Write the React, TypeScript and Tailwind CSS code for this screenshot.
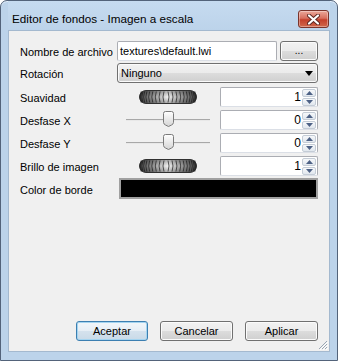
import React from 'react'

const btn =
  'bg-[linear-gradient(180deg,#f2f2f2_0%,#ebebeb_49%,#dddddd_50%,#cfcfcf_100%)] border border-[#707070] rounded-[3px] shadow-[inset_0_0_0_1px_#fbfbfb]'

function JogWheel() {
  const ridges = Array.from({ length: 21 }, (_, i) => 29 - 27 * Math.cos((Math.PI * (i + 0.5)) / 21))
  return (
    <svg width="58" height="14" viewBox="0 0 58 14">
      <defs>
        <linearGradient id="jw" x1="0" x2="1" y1="0" y2="0">
          <stop offset="0" stopColor="#4a4a4a" />
          <stop offset="0.25" stopColor="#9a9a9a" />
          <stop offset="0.5" stopColor="#f4f4f4" />
          <stop offset="0.75" stopColor="#9a9a9a" />
          <stop offset="1" stopColor="#4a4a4a" />
        </linearGradient>
        <linearGradient id="jv" x1="0" x2="0" y1="0" y2="1">
          <stop offset="0" stopColor="#000" stopOpacity="0.3" />
          <stop offset="0.5" stopColor="#000" stopOpacity="0" />
          <stop offset="1" stopColor="#000" stopOpacity="0.3" />
        </linearGradient>
      </defs>
      <rect x="0.5" y="0.5" width="57" height="13" rx="6.5" fill="url(#jw)" stroke="#3a3a3a" />
      {ridges.map((x, i) => (
        <path
          key={i}
          d={`M${x} 1.5 Q${x + (x < 29 ? -2 : 2)} 7 ${x} 12.5`}
          stroke="#222"
          strokeOpacity="0.8"
          strokeWidth="0.9"
          fill="none"
        />
      ))}
      <rect x="0.5" y="0.5" width="57" height="13" rx="6.5" fill="url(#jv)" />
    </svg>
  )
}

function Slider() {
  return (
    <div className="relative w-[84px] h-[16px] flex items-center">
      <div className="w-full h-[2px] bg-[#e8e8e8] border-t border-[#a8a8a8]" />
      {/* thumb */}
      <svg className="absolute left-[37px] top-[-1px]" width="11" height="16" viewBox="0 0 11 16">
        <defs>
          <linearGradient id="th" x1="0" x2="0" y1="0" y2="1">
            <stop offset="0" stopColor="#ffffff" />
            <stop offset="1" stopColor="#d4d4d4" />
          </linearGradient>
        </defs>
        <path
          d="M0.5 2.5 Q0.5 0.5 2.5 0.5 H8.5 Q10.5 0.5 10.5 2.5 V11.5 Q10.5 13 8.5 14 L5.5 15.5 L2.5 14 Q0.5 13 0.5 11.5 Z"
          fill="url(#th)"
          stroke="#7a7a7a"
        />
      </svg>
    </div>
  )
}

function Arrow({ up }: { up?: boolean }) {
  return (
    <div className="h-[8px] w-[14px] flex items-center justify-center rounded-[2px] border border-[#c4ccd6] bg-[linear-gradient(180deg,#f6f8fa,#e1e7ee)]">
      <svg width="7" height="4" viewBox="0 0 7 4">
        <path d={up ? 'M0 4 L3.5 0 L7 4 Z' : 'M0 0 L3.5 4 L7 0 Z'} fill="#4d6185" />
      </svg>
    </div>
  )
}

function Spin({ value }: { value: string }) {
  return (
    <div className="w-[98px] h-[20px] flex items-center bg-white border border-[#abadb3] border-b-[#dbdfe6] rounded-[2px]">
      <span className="flex-1 text-right pr-[1px] text-[12px] leading-none">{value}</span>
      <div className="flex flex-col gap-px mr-[1px]">
        <Arrow up />
        <Arrow />
      </div>
    </div>
  )
}

function Label({ children }: { children: React.ReactNode }) {
  return <div className="w-[97px] shrink-0 pt-[3px] text-[11px] leading-none">{children}</div>
}

export default function App() {
  return (
    <div
      className="relative flex flex-col w-[338px] h-[361px] rounded-t-[7px] border border-[#53637a] bg-[#bcd3ea] px-[7px] pb-[8px] text-black shadow-[inset_0_1px_0_#e3eefa]"
      style={{ fontFamily: '"Liberation Sans", Arial, sans-serif' }}
    >
      {/* Title bar */}
      <div className="h-[29px] flex items-start justify-between bg-[linear-gradient(180deg,#c6dbf0,#bcd3ea)]">
        <span className="pl-[4px] pt-[12px] text-[11.7px] leading-none">Editor de fondos - Imagen a escala</span>
        <div className="mt-[9px] mr-[1px] w-[31px] h-[18px] flex items-center justify-center rounded-[3px] border border-[#7a342b] bg-[linear-gradient(180deg,#eba89a_0%,#d8705f_45%,#c4402b_55%,#d0684c_100%)] shadow-[inset_0_0_0_1px_rgba(255,255,255,0.35)]">
          <svg width="13" height="11" viewBox="0 0 13 11">
            <path d="M2 1.5 L11 9.5 M11 1.5 L2 9.5" stroke="#5a2620" strokeWidth="4" strokeLinecap="round" />
            <path d="M2 1.5 L11 9.5 M11 1.5 L2 9.5" stroke="#ffffff" strokeWidth="2.2" strokeLinecap="round" />
          </svg>
        </div>
      </div>

      {/* Client area */}
      <div className="relative flex-1 flex flex-col bg-[#f0f0f0] border border-[#a4b9cf] px-[11px] pt-[10px] pb-[10px]">
        <div className="flex items-center h-[20px]">
          <Label>Nombre de archivo</Label>
          <div className="w-[160px] h-[20px] flex items-center pl-[2px] bg-white border border-[#abadb3] border-b-[#dbdfe6] rounded-[2px] text-[11px] leading-none">
            {'textures\\default.lwi'}
          </div>
          <button className={`ml-[3px] w-[38px] h-[20px] flex items-end justify-center pb-[4px] text-[10px] leading-none ${btn}`}>
            ...
          </button>
        </div>

        <div className="flex items-center h-[20px] mt-[2px]">
          <Label>Rotación</Label>
          <div className={`flex-1 h-[20px] flex items-center justify-between pl-[3px] pr-[4px] text-[11px] leading-none ${btn}`}>
            <span>Ninguno</span>
            <svg width="8" height="5" viewBox="0 0 8 5">
              <path d="M0 0 H8 L4 5 Z" fill="#000" />
            </svg>
          </div>
        </div>

        <div className="flex items-center h-[20px] mt-[4px]">
          <Label>Suavidad</Label>
          <div className="w-[103px] flex justify-center pr-[1px]">
            <JogWheel />
          </div>
          <Spin value="1" />
        </div>

        <div className="flex items-center h-[20px] mt-[3px]">
          <Label>Desfase X</Label>
          <div className="w-[103px] flex justify-center pr-[1px]">
            <Slider />
          </div>
          <Spin value="0" />
        </div>

        <div className="flex items-center h-[20px] mt-[3px]">
          <Label>Desfase Y</Label>
          <div className="w-[103px] flex justify-center pr-[1px]">
            <Slider />
          </div>
          <Spin value="0" />
        </div>

        <div className="flex items-center h-[20px] mt-[3px]">
          <Label>Brillo de imagen</Label>
          <div className="w-[103px] flex justify-center pr-[1px]">
            <JogWheel />
          </div>
          <Spin value="1" />
        </div>

        <div className="flex items-center h-[21px] mt-[2px]">
          <Label>Color de borde</Label>
          <div className="ml-[2px] flex-1 h-[21px] bg-black border-2 border-[#a0a0a0]" />
        </div>

        <div className="flex-1" />

        <div className="flex justify-end gap-[12px] text-[11px] leading-none">
          <button className="w-[72px] h-[20px] rounded-[3px] border border-[#3c7fb1] bg-[linear-gradient(180deg,#f1f6fa_0%,#e6eef5_49%,#d5e2ed_50%,#c9dae8_100%)] shadow-[inset_0_0_0_1px_#a4d4f0]">
            Aceptar
          </button>
          <button className={`w-[73px] h-[20px] ${btn}`}>Cancelar</button>
          <button className={`w-[73px] h-[20px] ${btn}`}>Aplicar</button>
        </div>

        {/* size grip */}
        <svg className="absolute right-[1px] bottom-[1px]" width="11" height="11" viewBox="0 0 11 11">
          <path d="M10 2 L2 10 M10 5 L5 10 M10 8 L8 10" stroke="#9aa6b3" strokeWidth="1" />
          <path d="M11 3 L3 11 M11 6 L6 11 M11 9 L9 11" stroke="#ffffff" strokeWidth="1" />
        </svg>
      </div>
    </div>
  )
}
